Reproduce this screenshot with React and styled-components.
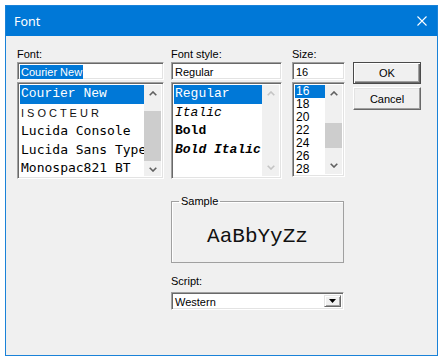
import React from 'react';
import styled, { createGlobalStyle, css } from 'styled-components';

const COURIER = '"Courier New", "Nimbus Mono PS", "Nimbus Mono L", "FreeMono", Courier, "Liberation Mono", monospace';

const Global = createGlobalStyle`
  html, body { margin: 0; padding: 0; background: #fff; }
  body { font-family: "Liberation Sans", Arial, sans-serif; font-size: 11px; color: #000; }
`;

const Window = styled.div`
  box-sizing: border-box;
  margin: 5px 0 0 5px;
  width: 433px;
  height: 351px;
  border: 1px solid #1a82d8;
  background: #f0f0f0;
  display: flex;
  flex-direction: column;
`;

const TitleBar = styled.div`
  height: 30px;
  flex: none;
  background: #0078d7;
  color: #fff;
  display: flex;
  align-items: center;
  justify-content: space-between;
  padding: 0 10px 0 8px;
  font-family: "Noto Sans", "Open Sans", sans-serif;
  font-size: 12.5px;
`;

const Body = styled.div`
  padding: 12px 0 0 11px;
`;

const TopRow = styled.div`
  display: flex;
  align-items: flex-start;
`;

const Column = styled.div`
  display: flex;
  flex-direction: column;
  width: ${p => p.$w}px;
  margin-right: ${p => p.$mr || 0}px;
`;

const Label = styled.div`
  height: 13px;
  line-height: 13px;
  margin-bottom: ${p => p.$mb ?? 1}px;
  white-space: nowrap;
`;

const sunken = css`
  box-sizing: border-box;
  border-top: 1px solid #a0a0a0;
  border-left: 1px solid #a0a0a0;
  border-bottom: 1px solid #fff;
  border-right: 1px solid #fff;
  box-shadow: inset 1px 1px 0 #696969, inset -1px -1px 0 #e3e3e3;
  background: #fff;
`;

const Field = styled.div`
  ${sunken};
  height: 18px;
  padding: 2px 2px 0 2px;
  line-height: 14px;
  white-space: nowrap;
  overflow: hidden;
`;

const FieldText = styled.span`
  padding: 0 1px;
  display: inline-block;
  height: 14px;
  ${p => p.$selected && css`background: #0078d7; color: #fff;`}
`;

const ListBox = styled.div`
  ${sunken};
  height: ${p => p.$h}px;
  margin-top: 2px;
  padding: 2px;
  display: flex;
`;

const Items = styled.div`
  flex: 1;
  min-width: 0;
  overflow: hidden;
  display: flex;
  flex-direction: column;
`;

const Item = styled.div`
  flex: none;
  height: ${p => p.$h}px;
  line-height: ${p => p.$h}px;
  padding-left: 1px;
  white-space: nowrap;
  overflow: hidden;
  font-family: ${p => p.$font || COURIER};
  font-size: ${p => p.$size || 13}px;
  font-style: ${p => (p.$italic ? 'italic' : 'normal')};
  font-weight: ${p => p.$weight || 400};
  letter-spacing: ${p => p.$ls || 0}px;
  color: ${p => p.$color || '#000'};
  ${p => p.$selected && css`background: #0078d7; color: #fff;`}
`;

const ScrollBar = styled.div`
  width: 17px;
  flex: none;
  background: #f0f0f0;
  display: flex;
  flex-direction: column;
`;

const ArrowBox = styled.div`
  height: 17px;
  flex: none;
  display: flex;
  align-items: center;
  justify-content: center;
`;

const Track = styled.div`
  flex: 1;
  display: flex;
  flex-direction: column;
`;

const Thumb = styled.div`
  margin-top: ${p => p.$top}px;
  height: ${p => p.$h}px;
  background: #cdcdcd;
`;

const Chevron = ({ down, color }) => (
  <svg width="8" height="5" viewBox="0 0 8 5">
    <polyline
      points={down ? '0.7,0.7 4,4 7.3,0.7' : '0.7,4.3 4,1 7.3,4.3'}
      fill="none"
      stroke={color}
      strokeWidth="1.6"
    />
  </svg>
);

const Scroll = ({ thumb, disabled }) => {
  const c = disabled ? '#c4c4c4' : '#606060';
  return (
    <ScrollBar>
      <ArrowBox><Chevron color={c} /></ArrowBox>
      <Track>{thumb && <Thumb $top={thumb[0]} $h={thumb[1]} />}</Track>
      <ArrowBox><Chevron down color={c} /></ArrowBox>
    </ScrollBar>
  );
};

const Buttons = styled.div`
  display: flex;
  flex-direction: column;
  gap: 3px;
  width: 68px;
  padding-top: 14px;
`;

const Button = styled.div`
  box-sizing: border-box;
  height: ${p => (p.$default ? 22 : 23)}px;
  display: flex;
  align-items: center;
  justify-content: center;
  background: #f0f0f0;
  ${p =>
    p.$default
      ? css`
          border: 1px solid #4a4a4a;
          box-shadow: inset 1px 1px 0 #fff, inset -1px -1px 0 #696969, inset -2px -2px 0 #a0a0a0;
        `
      : css`
          border-top: 1px solid #fff;
          border-left: 1px solid #fff;
          border-right: 1px solid #696969;
          border-bottom: 1px solid #696969;
          box-shadow: inset -1px -1px 0 #a0a0a0, inset 1px 1px 0 #e3e3e3;
        `}
`;

const Lower = styled.div`
  margin: 16px 0 0 154px;
  width: 173px;
  display: flex;
  flex-direction: column;
`;

const Group = styled.fieldset`
  margin: 0;
  padding: 0;
  border: 1px solid #a0a0a0;
  box-shadow: 1px 1px 0 #fff inset;
`;

const Legend = styled.legend`
  margin-left: 7px;
  padding: 0 2px;
  height: 13px;
  line-height: 13px;
`;

const SampleBox = styled.div`
  box-sizing: border-box;
  height: 54px;
  padding-top: 17px;
  text-align: center;
  font-family: ${COURIER};
  font-size: 21px;
  line-height: 24px;
  color: #111;
`;

const ScriptLabel = styled(Label)`
  margin-top: 12px;
`;

const Combo = styled.div`
  ${sunken};
  height: 18px;
  padding: 2px;
  display: flex;
`;

const ComboText = styled.div`
  flex: 1;
  line-height: 14px;
  padding-left: 1px;
`;

const DropButton = styled.div`
  box-sizing: border-box;
  width: 17px;
  background: #f0f0f0;
  border-top: 1px solid #e3e3e3;
  border-left: 1px solid #e3e3e3;
  border-right: 1px solid #696969;
  border-bottom: 1px solid #696969;
  box-shadow: inset 1px 1px 0 #fff, inset -1px -1px 0 #a0a0a0;
  display: flex;
  align-items: center;
  justify-content: center;
`;

const fonts = [
  { name: 'Courier New', selected: true },
  { name: 'ISOCTEUR', font: '"Liberation Sans", Arial, sans-serif', size: 11, ls: 3, color: '#111' },
  { name: 'Lucida Console', font: '"DejaVu Sans Mono", monospace' },
  { name: 'Lucida Sans Typewriter', font: '"DejaVu Sans Mono", monospace' },
  { name: 'Monospac821 BT', font: '"DejaVu Sans Mono", monospace' },
];

const styles = [
  { name: 'Regular', selected: true },
  { name: 'Italic', italic: true },
  { name: 'Bold', weight: 700 },
  { name: 'Bold Italic', italic: true, weight: 700 },
];

const sizes = ['16', '18', '20', '22', '24', '26', '28'];

export default function App() {
  return (
    <>
      <Global />
      <Window>
        <TitleBar>
          <span>Font</span>
          <svg width="10" height="10" viewBox="0 0 10 10">
            <path d="M0.5 0.5 L9.5 9.5 M9.5 0.5 L0.5 9.5" stroke="#fff" strokeWidth="1.1" />
          </svg>
        </TitleBar>
        <Body>
          <TopRow>
            <Column $w={147} $mr={7}>
              <Label>Font:</Label>
              <Field><FieldText $selected>Courier New</FieldText></Field>
              <ListBox $h={97}>
                <Items>
                  {fonts.map(f => (
                    <Item key={f.name} $h={18.6} $font={f.font} $size={f.size} $weight={f.weight} $ls={f.ls} $color={f.color} $selected={f.selected}>
                      {f.name}
                    </Item>
                  ))}
                </Items>
                <Scroll thumb={[9, 50]} />
              </ListBox>
            </Column>
            <Column $w={111} $mr={10}>
              <Label>Font style:</Label>
              <Field><FieldText>Regular</FieldText></Field>
              <ListBox $h={97}>
                <Items>
                  {styles.map(s => (
                    <Item key={s.name} $h={18.6} $italic={s.italic} $weight={s.weight} $selected={s.selected}>
                      {s.name}
                    </Item>
                  ))}
                </Items>
                <Scroll disabled />
              </ListBox>
            </Column>
            <Column $w={53} $mr={8}>
              <Label>Size:</Label>
              <Field><FieldText>16</FieldText></Field>
              <ListBox $h={95}>
                <Items>
                  {sizes.map((s, i) => (
                    <Item key={s} $h={13} $font={'"Liberation Sans", Arial, sans-serif'} $size={12} $selected={i === 0}>
                      {s}
                    </Item>
                  ))}
                </Items>
                <Scroll thumb={[21, 25]} />
              </ListBox>
            </Column>
            <Buttons>
              <Button $default>OK</Button>
              <Button>Cancel</Button>
            </Buttons>
          </TopRow>
          <Lower>
            <Group>
              <Legend>Sample</Legend>
              <SampleBox>AaBbYyZz</SampleBox>
            </Group>
            <ScriptLabel $mb={4}>Script:</ScriptLabel>
            <Combo>
              <ComboText>Western</ComboText>
              <DropButton>
                <svg width="7" height="4" viewBox="0 0 7 4">
                  <path d="M0 0 H7 L3.5 4 Z" fill="#000" />
                </svg>
              </DropButton>
            </Combo>
          </Lower>
        </Body>
      </Window>
    </>
  );
}
